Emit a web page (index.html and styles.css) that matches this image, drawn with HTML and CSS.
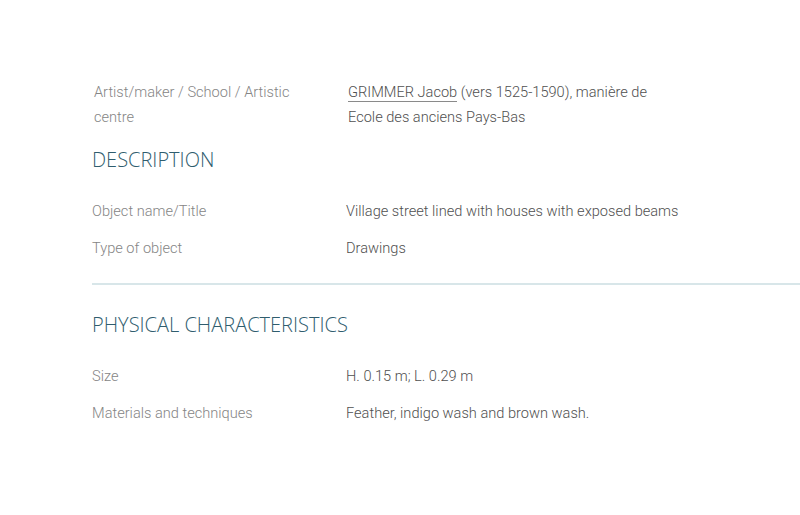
FILE: index.html
```html
<!DOCTYPE html>
<html lang="en">
<head>
<meta charset="utf-8">
<title>Object record</title>
<link rel="stylesheet" href="styles.css">
</head>
<body>
<main class="record">
  <dl class="fields fields-top">
    <div class="row">
      <dt class="label">Artist/maker / School / Artistic centre</dt>
      <dd class="value"><a class="link" href="#">GRIMMER Jacob</a> (vers 1525-1590), manière de<br>Ecole des anciens Pays-Bas</dd>
    </div>
  </dl>

  <section class="section">
    <h2 class="heading">DESCRIPTION</h2>
    <dl class="fields">
      <div class="row">
        <dt class="label">Object name/Title</dt>
        <dd class="value">Village street lined with houses with exposed beams</dd>
      </div>
      <div class="row">
        <dt class="label">Type of object</dt>
        <dd class="value">Drawings</dd>
      </div>
    </dl>
  </section>

  <hr class="divider">

  <section class="section section-physical">
    <h2 class="heading">PHYSICAL CHARACTERISTICS</h2>
    <dl class="fields">
      <div class="row">
        <dt class="label">Size</dt>
        <dd class="value">H. 0.15 m; L. 0.29 m</dd>
      </div>
      <div class="row">
        <dt class="label">Materials and techniques</dt>
        <dd class="value">Feather, indigo wash and brown wash.</dd>
      </div>
    </dl>
  </section>
</main>
</body>
</html>
```

FILE: styles.css
```css
html, body {
  margin: 0;
  padding: 0;
  background: #ffffff;
}

body {
  font-family: Roboto, "Liberation Sans", sans-serif;
  font-weight: 300;
  font-size: 14.6px;
  color: #555555;
}

.record {
  padding: 80px 0 0 92px;
}

.fields {
  margin: 0;
  display: flex;
  flex-direction: column;
  gap: 12px;
}

.fields-top {
  padding-left: 2px;
}

.row {
  display: grid;
  grid-template-columns: 254px 1fr;
  line-height: 25px;
}

.fields-top .row {
  grid-template-columns: 210px 1fr;
  column-gap: 44px;
}

.label {
  margin: 0;
  color: #858585;
}

.value {
  margin: 0;
  color: #505050;
}

.link {
  color: inherit;
  text-decoration: none;
  border-bottom: 1px solid #8a8a8a;
}

.section {
  display: flex;
  flex-direction: column;
  gap: 27px;
}

.heading {
  margin: 18px 0 0;
  font-family: "Open Sans", "DejaVu Sans", sans-serif;
  font-weight: 300;
  font-size: 20px;
  line-height: 24px;
  color: #2f5d6e;
  letter-spacing: 0;
}

.section-physical .heading {
  margin-top: 28px;
}

.divider {
  margin: 22px 0 0;
  border: 0;
  height: 2px;
  background: #d8e6e9;
}
```
